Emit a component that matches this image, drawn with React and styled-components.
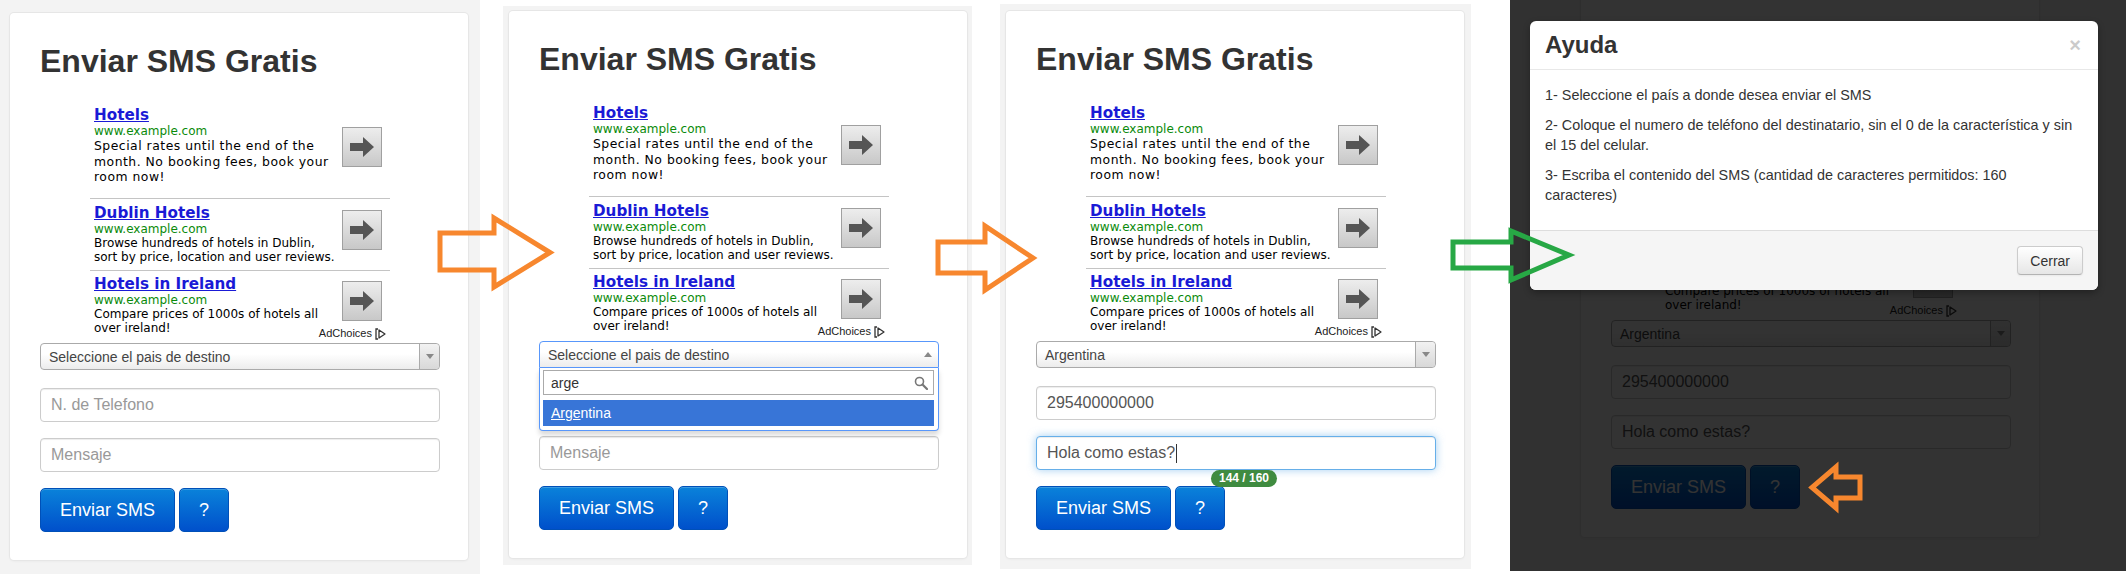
import React from 'react';
import styled, { createGlobalStyle } from 'styled-components';

const GlobalStyle = createGlobalStyle`
  html, body { margin: 0; padding: 0; background: #fff; }
  body { font-family: "Liberation Sans", Arial, sans-serif; }
  *, *::before, *::after { box-sizing: border-box; }
`;

const Stage = styled.div`
  position: relative;
  width: 2126px;
  height: 580px;
  display: flex;
  align-items: flex-start;
  overflow: hidden;
  background: #fff;
`;

const Shot = styled.div`
  flex: none;
  width: ${p => p.$w}px;
  height: ${p => p.$h}px;
  margin-top: ${p => p.$top}px;
  margin-left: ${p => p.$gap}px;
  padding: ${p => p.$pad};
  background: #f3f3f3;
`;

const DimShot = styled.div`
  position: relative;
  flex: none;
  overflow: hidden;
  width: 616px;
  height: 571px;
  margin-left: 39px;
  padding-left: 71px;
  background: #f2f2f2;
`;

const Backdrop = styled.div`
  position: absolute;
  inset: 0;
  background: rgba(0, 0, 0, 0.8);
`;

const Card = styled.div`
  width: 458px;
  height: 547px;
  margin-top: ${p => p.$shift}px;
  padding: 31px 28px 0 30px;
  background: #fff;
  border-radius: 4px;
  box-shadow: 0 0 0 1px #e6e6e6, 0 1px 3px rgba(0, 0, 0, 0.06);
`;

const Title = styled.h1`
  margin: 0;
  font-size: 32px;
  line-height: 35px;
  font-weight: bold;
  color: #333;
`;

/* ---------- Ad unit ---------- */
const AdUnit = styled.div`
  position: relative;
  width: 300px;
  height: 250px;
  margin: 14px auto 0;
  font-family: "DejaVu Sans", Verdana, sans-serif;
`;

const AdItem = styled.div`
  display: flex;
  align-items: flex-start;
  height: ${p => p.$h}px;
  padding: ${p => p.$pt}px 8px 0 4px;
  border-bottom: ${p => (p.$sep ? '1px solid #c4c4c4' : '0')};
`;

const AdText = styled.div`
  flex: none;
  width: 246px;
`;

const AdTitle = styled.a`
  display: block;
  font-weight: bold;
  font-size: 15.2px;
  line-height: 18px;
  color: #1a1ad6;
  text-decoration: underline;
  white-space: nowrap;
`;

const AdUrl = styled.div`
  font-size: 12px;
  line-height: 14px;
  color: #0a8a0a;
`;

const AdDesc = styled.div`
  font-size: ${p => (p.$loose ? '12.4px' : '12px')};
  line-height: ${p => (p.$loose ? '15.5px' : '14px')};
  letter-spacing: ${p => (p.$loose ? '0.5px' : '0')};
  color: #000;
`;

const AdGo = styled.div`
  flex: none;
  margin-left: auto;
  margin-top: ${p => p.$mt}px;
  width: 40px;
  height: 40px;
  border: 1px solid #a0a0a0;
  background: linear-gradient(to bottom, #ededed 0%, #c8c8c8 100%);
  display: flex;
  align-items: center;
  justify-content: center;
`;

const AdChoices = styled.div`
  position: absolute;
  right: 4px;
  bottom: 3px;
  display: flex;
  align-items: center;
  gap: 3px;
  font-family: "Liberation Sans", Arial, sans-serif;
  font-size: 11px;
  line-height: 13px;
  color: #222;
`;

/* ---------- Select ---------- */
const SelectWrap = styled.div`
  position: relative;
`;

const SelectBox = styled.div`
  height: 27px;
  display: flex;
  align-items: center;
  padding-left: 8px;
  border: 1px solid ${p => (p.$open ? '#5897fb' : '#aaa')};
  border-radius: ${p => (p.$open ? '4px 4px 0 0' : '4px')};
  background: linear-gradient(to bottom, #fff 0%, #fff 40%, #ececec 100%);
  font-size: 14px;
  color: #444;
`;

const SelectLabel = styled.span`
  flex: 1;
`;

const SelectArrow = styled.span`
  width: 20px;
  align-self: stretch;
  display: flex;
  align-items: center;
  justify-content: center;
  border-left: ${p => (p.$open ? '0' : '1px solid #aaa')};
  border-radius: 0 4px 4px 0;
  background: ${p => (p.$open ? 'transparent' : 'linear-gradient(to bottom, #f2f2f2, #d8d8d8)')};
`;

const Dropdown = styled.div`
  position: absolute;
  left: 0;
  right: 0;
  top: 100%;
  z-index: 2;
  padding: 2px 4px 4px 3px;
  background: #fff;
  border: 1px solid #5897fb;
  border-top: 0;
  border-radius: 0 0 4px 4px;
  box-shadow: 0 4px 5px rgba(0, 0, 0, 0.15);
`;

const Search = styled.div`
  height: 25px;
  display: flex;
  align-items: center;
  justify-content: space-between;
  padding: 0 5px 0 7px;
  border: 1px solid #aaa;
  font-size: 14px;
  color: #333;
  background: #fff;
`;

const Result = styled.div`
  margin-top: 5px;
  height: 26px;
  display: flex;
  align-items: center;
  padding-left: 8px;
  background: #3875d7;
  color: #fff;
  font-size: 14px;
`;

const Match = styled.span`
  text-decoration: underline;
`;

/* ---------- Inputs ---------- */
const Field = styled.div`
  position: relative;
  height: 34px;
  margin-top: ${p => p.$mt}px;
  display: flex;
  align-items: center;
  padding: 0 10px;
  border: 1px solid ${p => (p.$focus ? '#66afe9' : '#ccc')};
  border-radius: 4px;
  background: #fff;
  box-shadow: inset 0 1px 1px rgba(0, 0, 0, 0.075)
    ${p => (p.$focus ? ', 0 0 8px rgba(102, 175, 233, 0.6)' : '')};
  font-size: 16px;
  color: ${p => (p.$ph ? '#999' : '#555')};
`;

const Caret = styled.span`
  display: inline-block;
  width: 1px;
  height: 19px;
  margin-left: 1px;
  background: #333;
`;

const Counter = styled.span`
  position: absolute;
  left: 174px;
  top: calc(100% + 1px);
  z-index: 1;
  height: 17px;
  padding: 0 8px;
  border-radius: 9px;
  background: #3f8b40;
  color: #fff;
  font-size: 12px;
  font-weight: bold;
  line-height: 17px;
  white-space: nowrap;
`;

const ButtonRow = styled.div`
  display: flex;
  gap: 4px;
  margin-top: 16px;
`;

const BlueButton = styled.button`
  width: ${p => p.$w}px;
  height: 44px;
  padding: 0;
  border: 1px solid #0050b8;
  border-radius: 5px;
  background: linear-gradient(to bottom, #0a82da 0%, #0050cb 100%);
  box-shadow: inset 0 1px 0 rgba(255, 255, 255, 0.2);
  color: #fff;
  font-family: "Liberation Sans", Arial, sans-serif;
  font-size: 18px;
`;

/* ---------- Modal ---------- */
const Modal = styled.div`
  position: absolute;
  left: 20px;
  top: 21px;
  width: 568px;
  background: #fff;
  border-radius: 6px;
  overflow: hidden;
  box-shadow: 0 3px 7px rgba(0, 0, 0, 0.3);
  color: #333;
`;

const ModalHeader = styled.div`
  display: flex;
  align-items: center;
  justify-content: space-between;
  padding: 9px 15px;
  border-bottom: 1px solid #e8e8e8;
`;

const ModalTitle = styled.h3`
  margin: 0;
  font-size: 24px;
  line-height: 30px;
  font-weight: bold;
  color: #333;
`;

const CloseX = styled.span`
  margin-right: 2px;
  font-size: 20px;
  font-weight: bold;
  line-height: 20px;
  color: #000;
  opacity: 0.2;
`;

const ModalBody = styled.div`
  padding: 15px 21px 15px 15px;
`;

const HelpLine = styled.p`
  margin: 0 0 10px;
  font-size: 14.4px;
  line-height: 20px;
  color: #333;
`;

const ModalFooter = styled.div`
  display: flex;
  justify-content: flex-end;
  padding: 15px 15px 15px;
  border-top: 1px solid #ddd;
  background: #f5f5f5;
`;

const PlainButton = styled.button`
  height: 29px;
  padding: 0 12px;
  border: 1px solid #ccc;
  border-bottom-color: #b3b3b3;
  border-radius: 4px;
  background: linear-gradient(to bottom, #fff 0%, #e6e6e6 100%);
  box-shadow: inset 0 1px 0 rgba(255, 255, 255, 0.2), 0 1px 2px rgba(0, 0, 0, 0.05);
  color: #333;
  font-family: "Liberation Sans", Arial, sans-serif;
  font-size: 14px;
`;

/* ---------- Arrows ---------- */
const ArrowSvg = styled.svg`
  position: absolute;
  left: ${p => p.$x}px;
  top: ${p => p.$y}px;
  z-index: 10;
  overflow: visible;
  pointer-events: none;
`;

function Arrow({ a }) {
  const minX = Math.min(a.x0, a.x2) - 4;
  const maxX = Math.max(a.x0, a.x2) + 4;
  const top = a.hy0 - 4;
  const w = maxX - minX;
  const h = a.hy1 - a.hy0 + 8;
  const pts = [
    [a.x0, a.sy0], [a.x1, a.sy0], [a.x1, a.hy0], [a.x2, a.ty],
    [a.x1, a.hy1], [a.x1, a.sy1], [a.x0, a.sy1],
  ].map(p => p.join(',')).join(' ');
  return (
    <ArrowSvg $x={minX} $y={top} width={w} height={h} viewBox={`${minX} ${top} ${w} ${h}`}>
      <polygon points={pts} fill="none" stroke={a.color} strokeWidth="5" strokeLinejoin="miter" />
    </ArrowSvg>
  );
}

const ARROWS = [
  { color: '#f7872e', x0: 440, x1: 494, x2: 550, sy0: 233, sy1: 270, hy0: 218, hy1: 287, ty: 252.5 },
  { color: '#f7872e', x0: 938, x1: 985, x2: 1033, sy0: 242, sy1: 273, hy0: 226, hy1: 290, ty: 258 },
  { color: '#27a845', x0: 1453, x1: 1511, x2: 1569, sy0: 242, sy1: 268, hy0: 231, hy1: 280, ty: 255 },
  { color: '#f7872e', x0: 1860, x1: 1836, x2: 1812, sy0: 477, sy1: 498, hy0: 467, hy1: 508, ty: 487.5 },
];

/* ---------- Icons ---------- */
const GoIcon = () => (
  <svg width="24" height="20" viewBox="0 0 24 20">
    <path d="M0 6 H13 V0 L24 10 L13 20 V14 H0 Z" fill="#555" />
  </svg>
);

const AdChoicesIcon = () => (
  <svg width="11" height="12" viewBox="0 0 11 12">
    <path d="M3 1 H1 V11 H3" fill="none" stroke="#333" strokeWidth="1.3" />
    <path d="M4 2 L10 6 L4 10 Z" fill="none" stroke="#333" strokeWidth="1.3" strokeLinejoin="round" />
  </svg>
);

const Tri = ({ up }) => (
  <svg width="8" height="5" viewBox="0 0 8 5">
    <path d={up ? 'M0 5 L4 0 L8 5 Z' : 'M0 0 L8 0 L4 5 Z'} fill="#888" />
  </svg>
);

const Magnifier = () => (
  <svg width="14" height="14" viewBox="0 0 14 14">
    <circle cx="5.5" cy="5.5" r="4" fill="none" stroke="#777" strokeWidth="1.6" />
    <path d="M8.5 8.5 L13 13" stroke="#777" strokeWidth="2.2" strokeLinecap="round" />
  </svg>
);

/* ---------- Content ---------- */
const ADS = [
  { title: 'Hotels', desc: 'Special rates until the end of the month. No booking fees, book your room now!', h: 106, pt: 13, mt: 21, sep: true, loose: true },
  { title: 'Dublin Hotels', desc: 'Browse hundreds of hotels in Dublin, sort by price, location and user reviews.', h: 72, pt: 5, mt: 6, sep: true },
  { title: 'Hotels in Ireland', desc: 'Compare prices of 1000s of hotels all over ireland!', h: 72, pt: 4, mt: 6 },
];

function Ads() {
  return (
    <AdUnit>
      {ADS.map(ad => (
        <AdItem key={ad.title} $h={ad.h} $pt={ad.pt} $sep={ad.sep}>
          <AdText>
            <AdTitle>{ad.title}</AdTitle>
            <AdUrl>www.example.com</AdUrl>
            <AdDesc $loose={ad.loose}>{ad.desc}</AdDesc>
          </AdText>
          <AdGo $mt={ad.mt}><GoIcon /></AdGo>
        </AdItem>
      ))}
      <AdChoices>AdChoices <AdChoicesIcon /></AdChoices>
    </AdUnit>
  );
}

function SmsCard({ step, shift = 0 }) {
  const filled = step >= 3;
  const open = step === 2;
  return (
    <Card $shift={shift}>
      <Title>Enviar SMS Gratis</Title>
      <Ads />
      <SelectWrap>
        <SelectBox $open={open}>
          <SelectLabel>{filled ? 'Argentina' : 'Seleccione el pais de destino'}</SelectLabel>
          <SelectArrow $open={open}><Tri up={open} /></SelectArrow>
        </SelectBox>
        {open && (
          <Dropdown>
            <Search>arge<Magnifier /></Search>
            <Result><Match>Arge</Match>ntina</Result>
          </Dropdown>
        )}
      </SelectWrap>
      <Field $mt={18} $ph={!filled}>{filled ? '295400000000' : 'N. de Telefono'}</Field>
      <Field $mt={16} $ph={!filled} $focus={step === 3}>
        {filled ? 'Hola como estas?' : 'Mensaje'}
        {step === 3 && <Caret />}
        {step === 3 && <Counter>144 / 160</Counter>}
      </Field>
      <ButtonRow>
        <BlueButton $w={135}>Enviar SMS</BlueButton>
        <BlueButton $w={50}>?</BlueButton>
      </ButtonRow>
    </Card>
  );
}

export default function App() {
  return (
    <>
      <GlobalStyle />
      <Stage>
        <Shot $w={480} $h={574} $top={0} $gap={0} $pad="13px 0 0 10px">
          <SmsCard step={1} />
        </Shot>
        <Shot $w={469} $h={559} $top={6} $gap={23} $pad="5px 0 0 6px">
          <SmsCard step={2} />
        </Shot>
        <Shot $w={471} $h={565} $top={4} $gap={28} $pad="7px 0 0 6px">
          <SmsCard step={3} />
        </Shot>
        <DimShot>
          <SmsCard step={4} shift={-10} />
          <Backdrop />
          <Modal>
            <ModalHeader>
              <ModalTitle>Ayuda</ModalTitle>
              <CloseX>×</CloseX>
            </ModalHeader>
            <ModalBody>
              <HelpLine>1- Seleccione el país a donde desea enviar el SMS</HelpLine>
              <HelpLine>2- Coloque el numero de teléfono del destinatario, sin el 0 de la característica y sin el 15 del celular.</HelpLine>
              <HelpLine>3- Escriba el contenido del SMS (cantidad de caracteres permitidos: 160 caracteres)</HelpLine>
            </ModalBody>
            <ModalFooter>
              <PlainButton>Cerrar</PlainButton>
            </ModalFooter>
          </Modal>
        </DimShot>
        {ARROWS.map((a, i) => <Arrow key={i} a={a} />)}
      </Stage>
    </>
  );
}
